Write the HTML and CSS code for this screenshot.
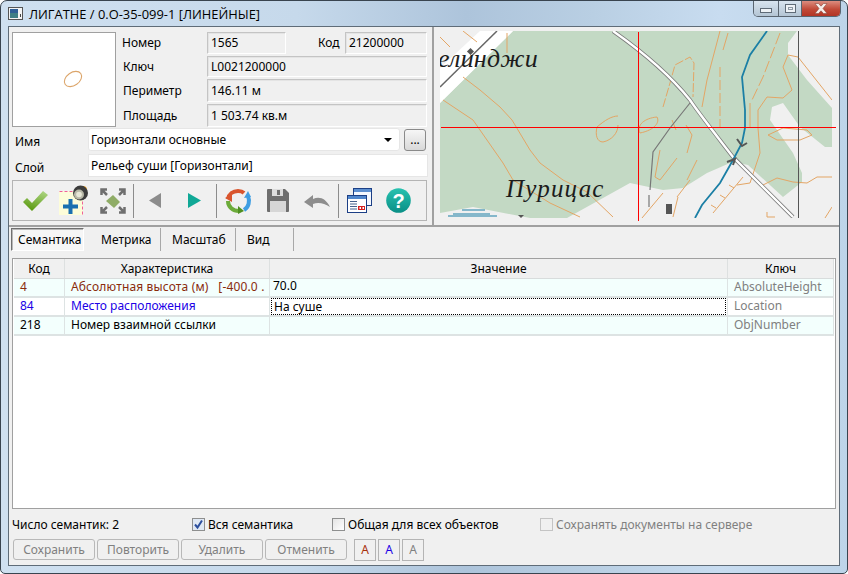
FILE: index.html
```html
<!DOCTYPE html>
<html lang="ru">
<head>
<meta charset="utf-8">
<title>ЛИГАТНЕ</title>
<link rel="stylesheet" href="styles.css">
</head>
<body>
<div class="window">
  <header class="titlebar">
    <svg class="app-icon" width="15" height="13" viewBox="0 0 15 13"><rect x="0.5" y="0.5" width="14" height="12" fill="#f4f4f4" stroke="#555"/><rect x="2" y="2" width="8" height="9" fill="#3f7f86"/><rect x="2" y="2" width="8" height="4" fill="#2f5f96"/><rect x="12" y="7" width="1" height="3" fill="#444"/></svg>
    <span class="title-text">ЛИГАТНЕ / 0.O-35-099-1 [ЛИНЕЙНЫЕ]</span>
    <div class="caption-btns">
      <div class="cap cap-min"><span class="min-glyph"></span></div>
      <div class="cap cap-max"><span class="max-glyph"></span></div>
      <div class="cap cap-close"><svg width="14" height="11" viewBox="0 0 14 11"><path d="M1 0.5H4.5L7 3.2L9.5 0.5H13L9 5.5L13 10.5H9.5L7 7.8L4.5 10.5H1L5 5.5Z" fill="#f6eeea" stroke="#8a4a40" stroke-width="0.6"/></svg></div>
    </div>
  </header>
  <div class="client">
    <section class="top">
      <div class="left">
        <div class="info">
          <div class="preview"><svg width="102" height="93" viewBox="0 0 102 93"><ellipse cx="60" cy="46" rx="9.5" ry="6.5" transform="rotate(-35 60 46)" fill="none" stroke="#dca56a" stroke-width="1.1"/></svg></div>
          <div class="info-grid">
            <span class="lbl">Номер</span><span class="val">1565</span><span class="lbl lbl-code">Код</span><span class="val">21200000</span>
            <span class="lbl lbl-i">Ключ</span><span class="val val-wide">L0021200000</span>
            <span class="lbl lbl-i">Периметр</span><span class="val val-wide">146.11 м</span>
            <span class="lbl lbl-i">Площадь</span><span class="val val-wide">1 503.74 кв.м</span>
          </div>
        </div>
        <div class="form-row form-name">
          <span class="form-lbl">Имя</span>
          <div class="combo"><span>Горизонтали основные</span><i class="arrow"></i></div>
          <div class="dots">...</div>
        </div>
        <div class="form-row form-layer">
          <span class="form-lbl">Слой</span>
          <div class="input">Рельеф суши [Горизонтали]</div>
        </div>
        <div class="toolbar">
          <div class="tg tg1">
            <div class="slot"><svg width="26" height="22" viewBox="0 0 26 22"><defs><linearGradient id="gc" x1="0.7" y1="0" x2="0.3" y2="1"><stop offset="0" stop-color="#a9d27e"/><stop offset="1" stop-color="#58980c"/></linearGradient></defs><path d="M1 12L5 8L10 13L21 1L26 5L10 21Z" fill="url(#gc)"/></svg></div>
            <div class="slot"><svg width="30" height="31" viewBox="0 0 30 31"><rect x="0" y="6" width="24" height="24" fill="#fdfdd9"/><path d="M0.5 6.5H24" stroke="#f0609a" stroke-dasharray="3 2" fill="none"/><path d="M23.5 6.500V30" stroke="#f0609a" stroke-dasharray="3 2" fill="none"/><path d="M4 21.500H19M11.500 14V29" stroke="#1a70b0" stroke-width="4" fill="none"/><circle cx="24" cy="5" r="4" fill="#f0a020"/><circle cx="21.500" cy="8" r="7.500" fill="#3c3c3c"/><circle cx="20" cy="9.500" r="5" fill="#b8b8a8"/><circle cx="20" cy="9.500" r="2.800" fill="#e8e8d8"/></svg></div>
            <div class="slot"><svg width="26" height="26" viewBox="0 0 26 26"><g fill="none" stroke="#6f6f6f" stroke-width="2.500"><path d="M1.500 7V1.500H7M1.500 1.500L7 7"/><path d="M19 1.500H24.500V7M24.500 1.500L19 7"/><path d="M1.500 19V24.500H7M1.500 24.500L7 19"/><path d="M24.500 19V24.500H19M24.500 24.500L19 19"/></g><path d="M6 13L13 7L20 14L14 20Z" fill="#8fac66"/></svg></div>
          </div>
          <div class="tsep"></div>
          <div class="tg tg2">
            <div class="slot"><svg width="13" height="15" viewBox="0 0 13 15"><path d="M12 0V15L0 7.500Z" fill="#8c8c8c"/></svg></div>
            <div class="slot"><svg width="13" height="15" viewBox="0 0 13 15"><path d="M0 0V15L13 7.500Z" fill="#10a896"/></svg></div>
          </div>
          <div class="tsep"></div>
          <div class="tg tg3">
            <div class="slot"><svg width="27" height="26" viewBox="0 0 27 26"><path d="M3 11C4 6 8 3 13 3C16 3 18 4 19 5" fill="none" stroke="#d9552e" stroke-width="4"/><path d="M0 10L7 14L7 6Z" fill="#d9552e"/><path d="M23 8C25 13 24 19 19 22" fill="none" stroke="#3f9ee2" stroke-width="4"/><path d="M19 10L26 9L23 3Z" fill="#3f9ee2"/><path d="M3 13C3 19 8 23 14 23" fill="none" stroke="#6cab3a" stroke-width="4"/><path d="M13 18L19 23L13 26Z" fill="#4f8f22"/></svg></div>
            <div class="slot"><svg width="22" height="23" viewBox="0 0 22 23"><path d="M0 1Q0 0 1 0H18L22 4V22Q22 23 21 23H1Q0 23 0 22Z" fill="#6e6e6e"/><rect x="5" y="0" width="11" height="7" fill="#dcdcdc"/><rect x="10" y="1" width="3" height="5" fill="#6e6e6e"/><rect x="3" y="12" width="16" height="11" fill="#d6d6d6"/></svg></div>
            <div class="slot"><svg width="26" height="14" viewBox="0 0 26 14"><path d="M0 8L9 1V5C16 2 22 5 26 13C20 9 14 8 9 10V14Z" fill="#8d8d8d"/></svg></div>
          </div>
          <div class="tsep"></div>
          <div class="tg tg4">
            <div class="slot"><svg width="25" height="25" viewBox="0 0 25 25"><rect x="6.500" y="0.500" width="18" height="17" fill="#f4f8ff" stroke="#1c3f86"/><rect x="7" y="1" width="17" height="3" fill="#5c8fd0"/><rect x="0.500" y="7.500" width="19" height="17" fill="#fff" stroke="#1c3f86"/><rect x="1" y="8" width="18" height="3" fill="#4f86cc"/><path d="M3 13.500H10M3 16H10M3 18.500H10M3 21H10" stroke="#46628c"/><rect x="11" y="18" width="7" height="4" fill="#d62020"/><rect x="12.500" y="19" width="1.500" height="2" fill="#fff"/><rect x="15.500" y="19" width="1.500" height="2" fill="#fff"/></svg></div>
            <div class="slot"><svg width="25" height="25" viewBox="0 0 25 25"><defs><linearGradient id="gh" x1="0" y1="0" x2="0" y2="1"><stop offset="0" stop-color="#28c2b0"/><stop offset="1" stop-color="#0a8f86"/></linearGradient></defs><circle cx="12.500" cy="12.500" r="12.300" fill="url(#gh)"/><text x="12.500" y="19.500" class="help-q">?</text></svg></div>
          </div>
        </div>
      </div>
      <div class="map-pane">
        <svg width="405" height="199" viewBox="434 27 405 199">
          <defs><clipPath id="mc"><rect x="440" y="31" width="392" height="187"/></clipPath></defs>
          <g clip-path="url(#mc)">
            <rect x="440" y="31" width="392" height="187" fill="#f0f0f0"/>
            <path d="M513 31L797 31L788 43L788 55L807 80L832 108L832 147L825 147L800 127L783 103L772 107L770 120L793 153L802 173L802 182L783 197L748 165L738 163L730 163L707 173L683 188L663 190L630 183L567 218L530 218L473 207L440 213L440 103Z" fill="#c3d9c4"/>
            <path d="M480 31L513 31L440 103L440 68Z" fill="#fff"/>
            <path d="M497 31L440 87" stroke="#666" stroke-width="1.500" fill="none"/>
            <rect x="468" y="49" width="5" height="5" fill="#555" transform="rotate(45 470.500 51.500)"/>
            <g fill="none" stroke="#e3a565" stroke-width="1">
              <path d="M440 37L450 47M463 31L477 42M507 33L507 53"/>
              <path d="M463 77L480 90L500 107L512 120L530 150L540 163L563 180L587 192L613 217"/>
              <path d="M443 100L473 120L503 163L513 180L550 203L580 217"/>
              <path d="M597 127C605 120 612 116 618 116M597 127C595 135 597 142 603 142C612 140 618 133 618 125"/>
              <path d="M640 133C636 125 645 118 657 117C660 122 655 130 640 133Z"/>
              <path d="M663 107L670 83L675 65L690 57L694 63L693 97" stroke-dasharray="9 2"/>
              <path d="M702 107L707 80L720 31M728 33L723 50"/>
              <path d="M720 67V127" stroke-dasharray="10 3"/>
              <path d="M780 33L763 77L752 100" stroke-dasharray="12 3"/>
              <path d="M750 103V127"/>
              <path d="M788 55L783 67L792 90L783 98L767 97L758 110L758 128L760 153L750 183L737 185"/>
              <path d="M788 55L798 57L832 100"/>
              <path d="M768 135L783 128L807 130L812 135L800 140L777 140Z"/>
              <path d="M763 185L777 178L793 182L807 183L817 177L832 177"/>
              <path d="M642 218L663 193M678 197L673 217M690 180L677 197"/>
              <path d="M672 120L676 130M660 150L655 177L660 180L677 158M686 125L692 135L687 153M697 160L687 180"/>
              <path d="M743 177L713 213M734 188L729 185M725 198L720 195M716 208L711 205"/>
              <path d="M767 212V217H775M825 218L832 207"/>
            </g>
            <path d="M613 31C640 50 670 75 690 100C700 115 720 140 733 157L793 217" fill="none" stroke="#7a7a7a" stroke-width="4"/>
            <path d="M613 31C640 50 670 75 690 100C700 115 720 140 733 157L793 217" fill="none" stroke="#fff" stroke-width="2.400"/>
            <path d="M767 31L750 55L742 77L745 110L745 128L742 143L733 160L720 183L702 205L695 218" fill="none" stroke="#1b7fa5" stroke-width="1.800"/>
            <path d="M737 139L742 146L747 143M727 162L735 159L733 165" fill="none" stroke="#555" stroke-width="2"/>
            <path d="M690 103L670 128L653 152L650 190" fill="none" stroke="#777" stroke-width="1.200"/>
            <path d="M649 195V207" fill="none" stroke="#777" stroke-width="1.200"/>
            <rect x="666" y="204" width="6" height="10" fill="#555"/>
            <rect x="798" y="31" width="1" height="187" fill="#555"/>
            <path d="M453 214H490M448 216H497M462 210H485" stroke="#1b7fa5" stroke-width="1" fill="none"/>
            <path d="M518 215H524L521 218Z" fill="#555"/>
            <text x="438" y="67" class="map-name map-top">елинджи</text>
            <text x="506" y="197" class="map-name map-bot">Пурицас</text>
          </g>
          <rect class="cross" x="441" y="127" width="395" height="1"/>
          <rect class="cross" x="638" y="32" width="1" height="189"/>
        </svg>
      </div>
    </section>
    <nav class="tabs">
      <div class="tab tab-active">Семантика</div>
      <div class="tab tab-2">Метрика</div>
      <div class="tab tab-3">Масштаб</div>
      <div class="tab tab-4">Вид</div>
    </nav>
    <div class="grid-frame">
      <table class="sem">
        <colgroup><col class="c1"><col class="c2"><col class="c3"><col class="c4"></colgroup>
        <thead><tr><th>Код</th><th>Характеристика</th><th>Значение</th><th>Ключ</th></tr></thead>
        <tbody>
          <tr class="tint red"><td>4</td><td class="clip">Абсолютная высота (м)   [-400.0 .</td><td class="raised">70.0</td><td class="key">AbsoluteHeight</td></tr>
          <tr class="blue"><td>84</td><td>Место расположения</td><td class="edit"><div class="focus">На суше</div></td><td class="key">Location</td></tr>
          <tr class="tint"><td>218</td><td>Номер взаимной ссылки</td><td></td><td class="key">ObjNumber</td></tr>
        </tbody>
      </table>
    </div>
    <footer class="foot">
      <div class="foot-row">
        <span class="count">Число семантик: 2</span>
        <label class="chk chk-all"><span class="box box-on"><svg width="11" height="11" viewBox="0 0 11 11"><path d="M2 5.500L4.500 8.500L9 1.500" fill="none" stroke="#2c4f9e" stroke-width="2"/></svg></span>Вся семантика</label>
        <label class="chk chk-common"><span class="box"></span>Общая для всех объектов</label>
        <label class="chk chk-off"><span class="box box-dis"></span>Сохранять документы на сервере</label>
      </div>
      <div class="btn-row">
        <div class="btn">Сохранить</div>
        <div class="btn">Повторить</div>
        <div class="btn">Удалить</div>
        <div class="btn">Отменить</div>
        <div class="abtn abtn-first a-red">A</div>
        <div class="abtn a-blue">A</div>
        <div class="abtn a-gray">A</div>
      </div>
    </footer>
  </div>
</div>
</body>
</html>
```
FILE: styles.css
```css
* { box-sizing: border-box; }
html, body { margin: 0; padding: 0; background: #fff; }
body { width: 848px; height: 574px; overflow: hidden; font: 12px/1 "Noto Sans", sans-serif; color: #000; }

.window {
  width: 848px; height: 574px; display: flex; flex-direction: column;
  border: 1px solid #39444f; border-radius: 7px 7px 5px 5px;
  background: linear-gradient(90deg, #cfe0f0 0%, #c6d9eb 35%, #adc4db 55%, #b9cfe3 70%, #c8dcf0 85%, #bdd4e9 100%);
  overflow: hidden;
}
.titlebar { height: 25px; flex: none; display: flex; align-items: flex-start; padding-left: 7px; }
.app-icon { margin-top: 6px; flex: none; }
.title-text { margin: 6px 0 0 6px; font: 12.9px/14px "Open Sans", sans-serif; color: #000; }
.caption-btns { margin-left: auto; margin-right: 6px; display: flex; height: 16px; border: 1px solid #5a6570; border-top: 0; border-radius: 0 0 5px 5px; overflow: hidden; }
.cap { display: flex; align-items: center; justify-content: center; height: 100%; }
.cap-min { width: 25px; background: linear-gradient(#d8e4ef, #b4c5d4); border-right: 1px solid #5a6570; }
.cap-max { width: 23px; background: linear-gradient(#d8e4ef, #b4c5d4); border-right: 1px solid #5a6570; }
.cap-close { width: 38px; background: linear-gradient(#dc8d7f, #c14a38 55%, #b23525); }
.min-glyph { width: 12px; height: 5px; margin-top: 4px; background: #eef2f6; border: 1px solid #5f6b77; }
.max-glyph { width: 11px; height: 9px; background: #eef2f6; border: 2px solid #5f6b77; border-width: 1px; box-shadow: inset 0 0 0 2px #eef2f6, inset 0 0 0 3px #8d98a3; }

.client { flex: 1; margin: 0 7px 7px; border: 1px solid #5f6c78; background: #f0f0f0; display: flex; flex-direction: column; min-height: 0; }

.top { height: 200px; flex: none; display: flex; border-bottom: 2px solid #a0a0a0; }
.left { width: 425px; flex: none; border-right: 2px solid #a0a0a0; padding: 5px 0 0 3px; }
.info { display: flex; gap: 6px; }
.preview { width: 104px; height: 95px; flex: none; background: #fff; border: 1px solid #a0a0a0; }
.info-grid { display: grid; grid-template-columns: 85px 79px 59px 82px; grid-template-rows: 22px 21px 23px 23px; gap: 2px 0; align-items: center; }
.lbl { line-height: 16px; }
.lbl-i { padding-left: 1px; }
.lbl-code { padding-left: 32px; }
.val { height: 100%; display: flex; align-items: center; padding-left: 3px; background: #f0f0f0; border: 1px solid; border-color: #c4c4c4 #fff #fff #c4c4c4; box-shadow: inset 1px 1px 0 #e4e4e4; }
.val-wide { grid-column: 2 / 5; }

.form-row { display: flex; align-items: center; }
.form-name { margin-top: 1px; height: 23px; }
.form-layer { margin-top: 3px; height: 23px; }
.form-lbl { width: 76px; flex: none; padding: 4px 0 0 3px; }
.combo { width: 312px; height: 23px; background: #fff; border-radius: 3px; display: flex; align-items: center; justify-content: space-between; padding: 0 3px 0 2px; border: 1px solid #e6e6e6; }
.arrow { width: 0; height: 0; margin: 0 4px 0 0; border: 4px solid transparent; border-top-color: #000; border-bottom: 0; }
.dots { width: 22px; height: 22px; margin-left: 4px; border: 1px solid #8a8a8a; border-radius: 3px; background: linear-gradient(#f6f6f6, #d8d8d8); text-align: center; line-height: 20px; }
.input { width: 340px; height: 23px; background: #fff; border: 1px solid #e6e6e6; display: flex; align-items: center; padding: 0 0 0 2px; }

.toolbar { width: 415px; height: 41px; margin-top: 3px; border: 1px solid #b4b4b4; display: flex; align-items: center; padding-left: 2px; }
.tg { display: flex; justify-content: center; height: 100%; }
.tg1 { width: 118px; justify-content: flex-start; }
.tg2 { width: 82px; }
.tg3 { width: 121px; }
.tg4 { padding-left: 1px; }
.slot { width: 39px; display: flex; align-items: center; justify-content: center; }
.tsep { width: 1px; height: 34px; background: #8c8c8c; flex: none; }
.help-q { font: bold 20px "Liberation Sans", sans-serif; fill: #fff; text-anchor: middle; }

.map-pane { flex: 1; min-width: 0; }
.map-pane svg { display: block; }
.map-name { font-family: "Liberation Serif", serif; font-style: italic; fill: #1c1c1c; }
.map-top { font-size: 26px; letter-spacing: 0.2px; }
.map-bot { font-size: 25px; letter-spacing: 1.2px; }
.cross { fill: #ff0000; }

.tabs { height: 24px; flex: none; display: flex; padding: 1px 0 0 2px; }
.tab { height: 23px; display: flex; align-items: center; padding-left: 11px; border-right: 1px solid #a8a8a8; margin-bottom: 1px; }
.tab-active { width: 73px; padding-left: 6px; background: #f6f6f6; border: 1px solid; border-color: #707070 #fff #fff #707070; box-shadow: inset 1px 1px 0 #b8b8b8; }
.tab-2 { width: 77px; padding-left: 17px; }
.tab-3 { width: 75px; }
.tab-4 { width: 58px; }

.grid-frame { height: 251px; flex: none; margin: 7px 3px 0; border: 1px solid #a0a0a0; background: #fff; padding: 0 1px; }
.sem { width: 820px; table-layout: fixed; border-collapse: separate; border-spacing: 0; }
.c1 { width: 51px; } .c2 { width: 205px; } .c3 { width: 458px; } .c4 { width: 106px; }
.sem th { height: 20px; padding: 0; font-weight: normal; background: #f0f0f0; border-right: 1px solid #dde0e0; border-bottom: 1px solid #d8dcdc; text-align: center; color: #000; }
.sem td { height: 19px; padding: 0 0 1px 6px; background: #fff; border-right: 1px solid #dde3e3; border-bottom: 2px solid #dde3e3; white-space: pre; overflow: hidden; color: inherit; }
.sem td.clip { letter-spacing: 0.15px; }
.sem .tint td { background: #f3fffd; }
.sem .red { color: #8a2c0c; }
.sem .blue { color: #2000e6; }
.sem td.key { color: #808080; }
.sem td.raised { padding: 0 0 3px 3px; color: #000; }
.sem td.edit { padding: 0 1px 0 1px; color: #000; }
.focus { height: 17px; line-height: 15px; padding-left: 2px; border: 1px dotted #000; }

.foot { flex: 1; display: flex; flex-direction: column; }
.foot-row { height: 29px; display: flex; align-items: center; padding: 2px 0 0 3px; }
.count { width: 180px; }
.chk { display: flex; align-items: center; gap: 3px; }
.chk-all { width: 140px; }
.chk-common { width: 208px; }
.chk-off { color: #808080; }
.box { width: 13px; height: 13px; background: linear-gradient(135deg, #e4e4e4, #fff); border: 1px solid #8e8f8f; display: flex; align-items: center; justify-content: center; }
.box-on { background: #dfe8f4; }
.box-dis { background: #f0f0f0; border-color: #c4c4c4; }
.btn-row { display: flex; gap: 2px; padding: 0 0 0 4px; margin-top: 1px; }
.btn { width: 82px; height: 21px; display: flex; align-items: center; justify-content: center; color: #808080; border: 1px solid #b8b8b8; border-radius: 3px; background: #f0f0f0; }
.abtn { width: 22px; height: 22px; display: flex; align-items: center; justify-content: center; border: 1px solid #b4b4b4; background: #f0f0f0; }
.abtn-first { margin-left: 5px; }
.a-red { color: #a8300c; }
.a-blue { color: #2000e6; }
.a-gray { color: #808080; }
```
